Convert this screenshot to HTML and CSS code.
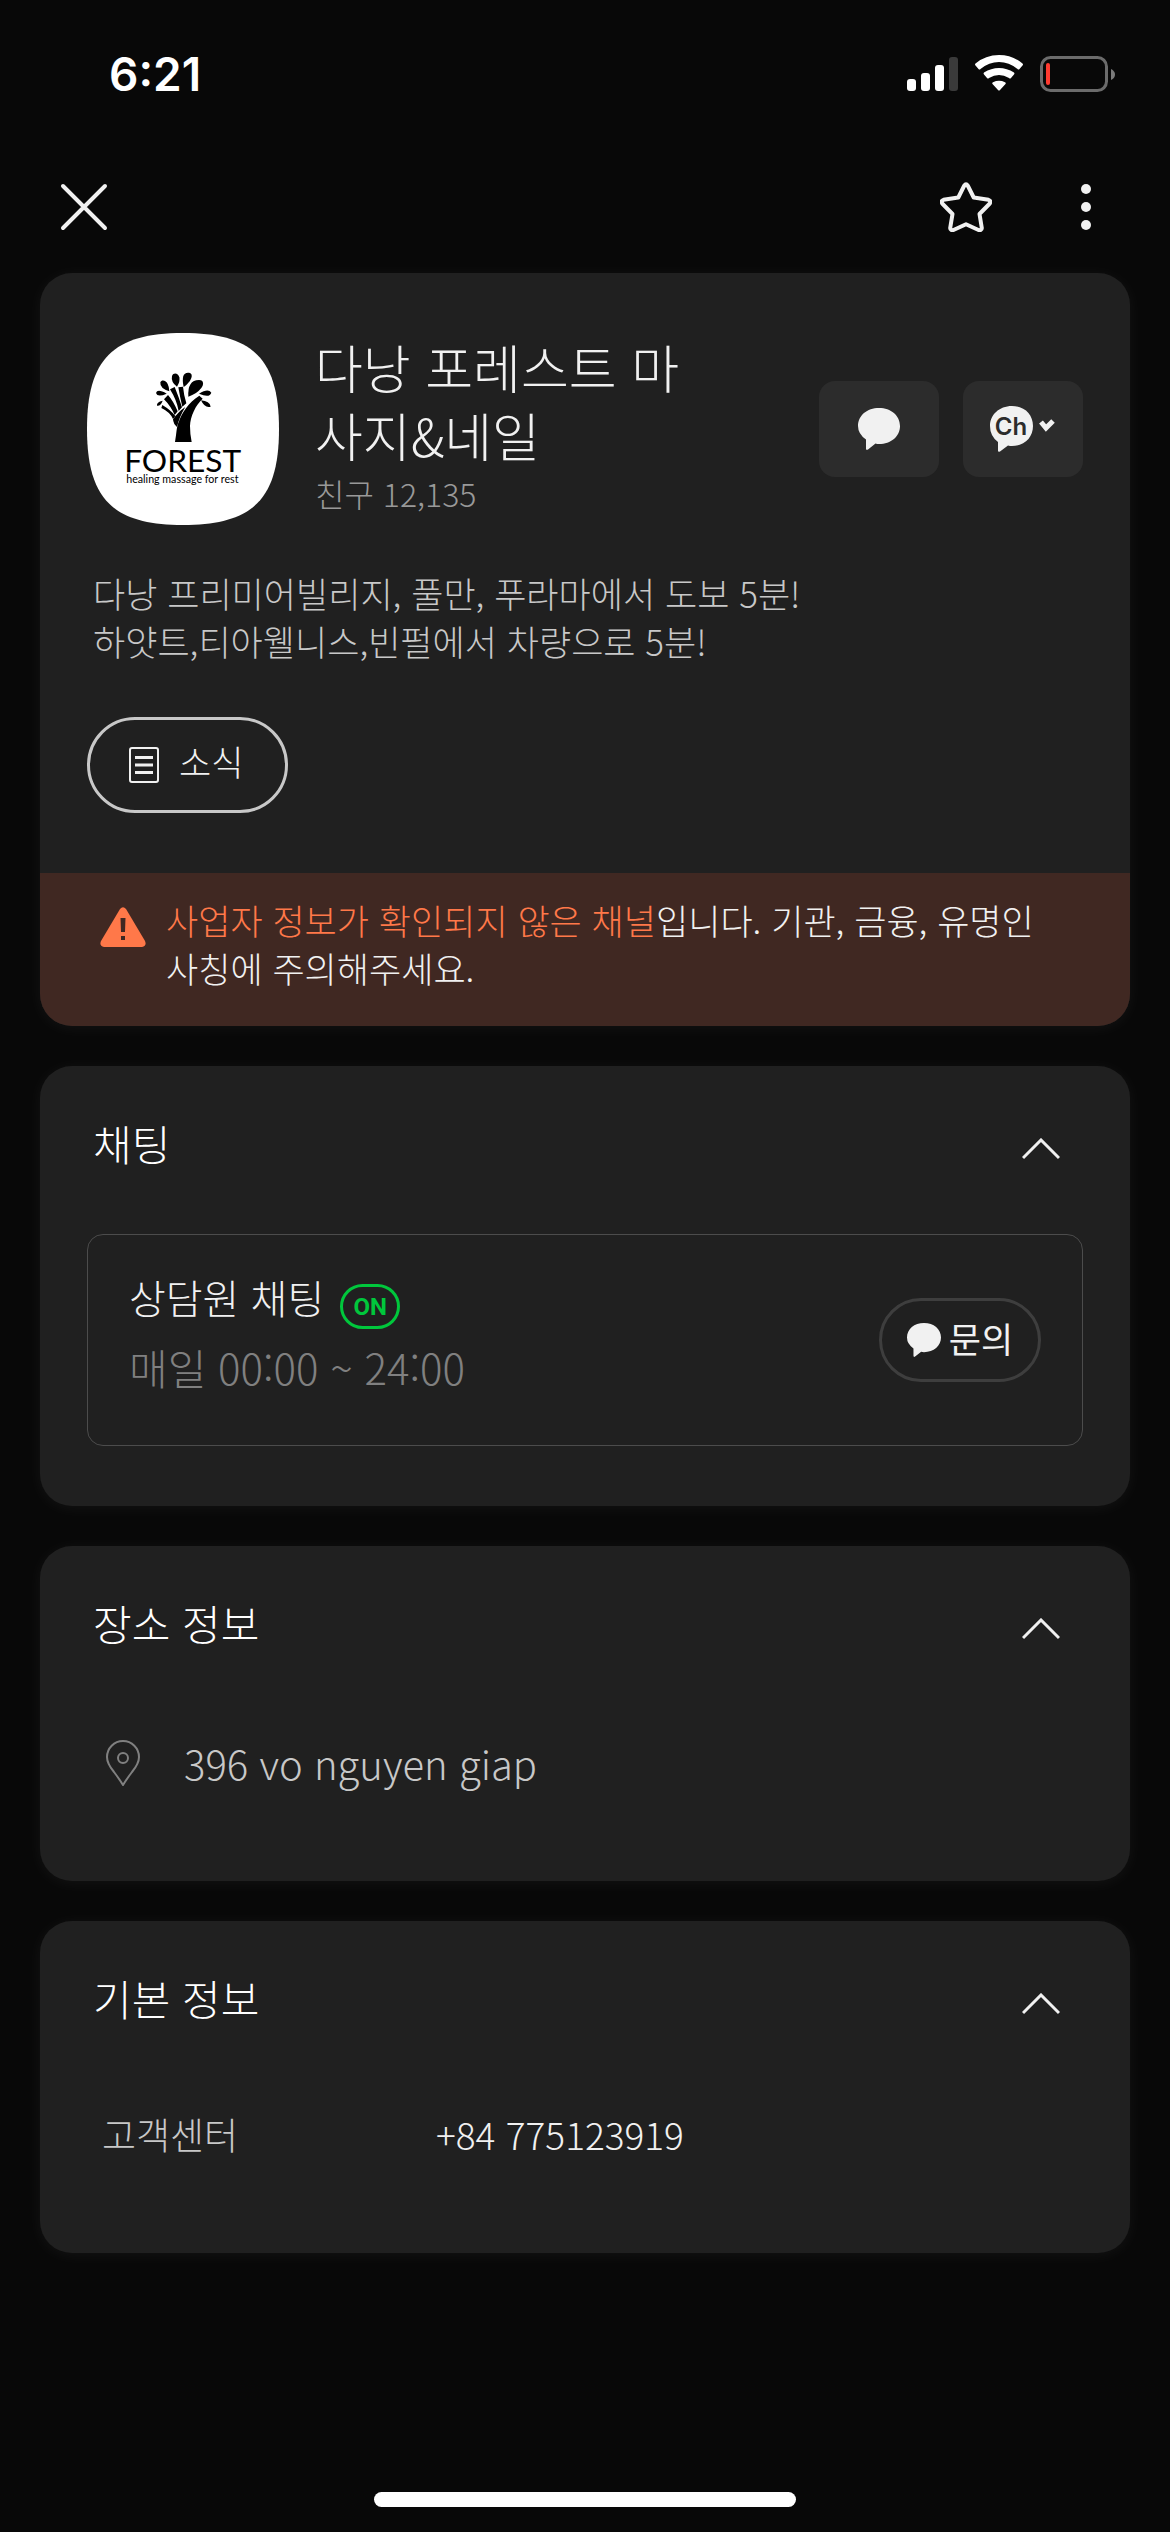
FILE: index.html
```html
<!DOCTYPE html>
<html lang="ko">
<head>
<meta charset="utf-8">
<meta name="viewport" content="width=device-width, initial-scale=1">
<title>다낭 포레스트 마사지&amp;네일</title>
<link rel="stylesheet" href="styles.css">
</head>
<body>
<div class="screen">
  <div class="status-bar">
    <time class="clock">6:21</time>
    <svg class="status-icons" viewBox="0 0 210 40" aria-hidden="true">
      <rect x="0" y="25" width="9" height="12" rx="3" fill="#fff"/>
      <rect x="14" y="19" width="9" height="18" rx="3" fill="#fff"/>
      <rect x="28" y="11" width="9" height="26" rx="3" fill="#fff"/>
      <rect x="42" y="3" width="9" height="34" rx="3" fill="#3a3a3a"/>
      <path fill="#fff" d="M68.500 11.500 Q67.500 10.500 68.500 9.500 Q78.500 1 92 1 T115.500 9.500 Q116.500 10.500 115.500 11.500 L112.500 15 Q111.500 16 110.500 15 Q102 8 92 8 T73.500 15 Q72.500 16 71.500 15Z"/>
      <path fill="#fff" d="M77 20.500 Q76 19.500 77 18.500 Q84 14 92 14 T107 18.500 Q108 19.500 107 20.500 L104 24 Q103 25 102 24 Q97 21 92 21 T82 24 Q81 25 80 24Z"/>
      <path fill="#fff" d="M85.500 30 Q84.500 29 86 28.200 Q92 25.500 98 28.200 Q99.500 29 98.500 30 L93 36 Q92 37 91 36Z"/>
      <rect x="134.500" y="3.500" width="65" height="33" rx="9" fill="none" stroke="#6b6b6b" stroke-width="3"/>
      <rect x="139" y="9" width="4" height="22" rx="2" fill="#ff3b30"/>
      <path d="M204 15 Q208 17 208 20.500 T204 26Z" fill="#7a7a7a"/>
    </svg>
  </div>

  <nav class="toolbar">
    <button class="icon-button" type="button" aria-label="닫기">
      <svg class="icon-close" viewBox="0 0 48 48"><path d="M3 3 45 45M45 3 3 45" fill="none" stroke="#f1f1f1" stroke-width="4" stroke-linecap="round"/></svg>
    </button>
    <div class="toolbar-actions">
      <button class="icon-button" type="button" aria-label="즐겨찾기">
        <svg class="icon-star" viewBox="0 0 52 50"><path d="M24.300 3.500Q26 .800 27.700 3.500L33.700 15.500 48.500 17.800Q51.500 18.800 49.800 21.500L39.500 32 41.800 46Q41.600 48.800 38.500 48L26 42.300 13.500 48Q10.400 48.800 10.200 46L12.500 32 2.200 21.500Q.500 18.800 3.500 17.800L18.300 15.500Z" fill="none" stroke="#f1f1f1" stroke-width="4" stroke-linejoin="round"/></svg>
      </button>
      <button class="icon-button" type="button" aria-label="더보기">
        <svg class="icon-more" viewBox="0 0 12 48"><g fill="#f1f1f1"><circle cx="6" cy="6" r="5"/><circle cx="6" cy="24" r="5"/><circle cx="6" cy="42" r="5"/></g></svg>
      </button>
    </div>
  </nav>

  <main class="cards">
    <section class="card">
      <div class="profile">
        <svg class="avatar" viewBox="21 39 576 576" role="img" aria-label="FOREST">
          <path fill="#fff" d="M309 39C519 39 597 117 597 327S519 615 309 615 21 537 21 327 99 39 309 39Z"/>
          <g fill="#000">
            <path d="M285 366C290 340 289 322 296 306C305 280 325 247 358 227L368 236C346 256 331 290 330 318Q330 342 335 366Z"/>
            <path d="M291 321Q280 312 279 298Q295 275 316 261Q298 290 291 321Z"/>
            <path d="M247 255Q272 270 286 288L279 297Q270 276 244 264Z"/>
            <path d="M264 225Q280 243 293 274L284 285Q272 258 252 238Z"/>
            <path d="M284 201Q296 230 306 262L296 273Q290 240 270 208Z"/>
            <path d="M309 200Q311 222 319 250L307 260Q300 232 295 202Z"/>
            <path d="M325 230Q322 180 357 180C373 180 371 195 364 204Q350 222 325 230Z"/>
            <path d="M311 201Q302 158 324 158C345 158 334 185 311 201Z"/>
            <path d="M291 200Q272 186 276 168C281 156 295 160 298 172Q301 184 291 200Z"/>
            <path d="M268 214Q239 205 241 187C246 177 259 183 263 192Q268 202 268 214Z"/>
            <path d="M260 221Q232 233 228 219Q232 205 260 221Z"/>
            <path d="M248 242Q242 259 231 257Q229 246 248 242Z"/>
            <path d="M357 221Q385 204 394 218Q389 235 357 221Z"/>
            <path d="M363 241Q389 243 392 260Q374 265 363 241Z"/>
          </g>
          <text class="logo-name" x="308" y="455">FOREST</text>
          <text class="logo-tagline" x="307" y="488">healing massage for rest</text>
        </svg>
        <div class="profile-text">
          <h1 class="name">다낭 포레스트 마사지&amp;네일</h1>
          <p class="friends">친구 12,135</p>
        </div>
        <div class="profile-actions">
          <button class="tile" type="button" aria-label="채팅">
            <svg class="icon-bubble" viewBox="0 0 42 42"><path fill="#f1f1f1" d="M21 0C33 0 42 7.500 42 18S33 36 21 36Q19 36 17.500 35.500L10 41.500Q8 42.600 8 40.500V31.500Q0 26 0 18C0 7.500 9 0 21 0Z"/></svg>
          </button>
          <button class="tile" type="button" aria-label="채널 메뉴">
            <svg class="icon-channel" viewBox="0 0 66 46"><path fill="#f1f1f1" d="M22 0C35 0 43 9 43 20S35 40 22 40Q20 40 18 39.500L10 45.500Q8 46.500 8 44.500V36Q0 30 0 20C0 9 9 0 22 0Z"/><text class="ch" x="21" y="29">Ch</text><path d="M51 16 56 22 63 15" fill="none" stroke="#f1f1f1" stroke-width="5"/></svg>
          </button>
        </div>
      </div>
      <p class="description">다낭 프리미어빌리지, 풀만, 푸라마에서 도보 5분!<br>하얏트,티아웰니스,빈펄에서 차량으로 5분!</p>
      <button class="news" type="button">
        <svg class="icon-news" viewBox="0 0 30 36"><rect x="1" y="1" width="28" height="34" rx="2" fill="none" stroke="#f1f1f1" stroke-width="2"/><path d="M6 10.500H24M6 18H24M6 25.500H24" stroke="#f1f1f1" stroke-width="3"/></svg>
        <span>소식</span>
      </button>
      <div class="notice">
        <svg class="icon-warning" viewBox="0 0 46 40"><path fill="#ff7849" d="M20 2Q23-1.500 26 2L45 34Q47 39 42 40H4Q-1 39 1 34Z"/><path fill="#402822" d="M20.500 11H25.500L25 25H21ZM21 29H25V33H21Z"/></svg>
        <p class="notice-text"><strong class="alert">사업자 정보가 확인되지 않은 채널</strong>입니다. 기관, 금융, 유명인<br>사칭에 주의해주세요.</p>
      </div>
    </section>

    <section class="card">
      <header class="card-header">
        <h2 class="card-title">채팅</h2>
        <button class="icon-button toggle" type="button" aria-label="채팅 접기">
          <svg class="icon-chevron" viewBox="0 0 38 22"><path d="M1 20 19 2 37 20" fill="none" stroke="#f1f1f1" stroke-width="3"/></svg>
        </button>
      </header>
      <div class="chat-box">
        <div class="chat-info">
          <div class="chat-name"><span>상담원 채팅</span><span class="badge">ON</span></div>
          <p class="chat-hours">매일 00:00 ~ 24:00</p>
        </div>
        <button class="ask" type="button">
          <svg class="icon-bubble-small" viewBox="0 0 42 42"><path fill="#f1f1f1" d="M21 0C33 0 42 7.500 42 18S33 36 21 36Q19 36 17.500 35.500L10 41.500Q8 42.600 8 40.500V31.500Q0 26 0 18C0 7.500 9 0 21 0Z"/></svg>
          <span>문의</span>
        </button>
      </div>
    </section>

    <section class="card">
      <header class="card-header">
        <h2 class="card-title">장소 정보</h2>
        <button class="icon-button toggle" type="button" aria-label="장소 정보 접기">
          <svg class="icon-chevron" viewBox="0 0 38 22"><path d="M1 20 19 2 37 20" fill="none" stroke="#f1f1f1" stroke-width="3"/></svg>
        </button>
      </header>
      <address class="place">
        <svg class="icon-pin" viewBox="0 0 34 46"><g fill="none" stroke="#808080" stroke-width="2"><path d="M17 45Q14 40 8 32C3 26 1 22 1 17A16 16 0 0 1 33 17C33 22 31 26 26 32Q20 40 17 45Z"/><circle cx="17" cy="18" r="5"/></g></svg>
        <span>396 vo nguyen giap</span>
      </address>
    </section>

    <section class="card">
      <header class="card-header">
        <h2 class="card-title">기본 정보</h2>
        <button class="icon-button toggle" type="button" aria-label="기본 정보 접기">
          <svg class="icon-chevron" viewBox="0 0 38 22"><path d="M1 20 19 2 37 20" fill="none" stroke="#f1f1f1" stroke-width="3"/></svg>
        </button>
      </header>
      <dl class="details">
        <dt>고객센터</dt>
        <dd><a href="tel:+84775123919">+84 775123919</a></dd>
      </dl>
    </section>
  </main>

  <div class="home-indicator"></div>
</div>
</body>
</html>
```
FILE: styles.css
```css
* {
  box-sizing: border-box;
}

body {
  margin: 0;
  background: #080808;
  color: #f1f1f1;
  font-family: "Noto Sans CJK KR", sans-serif;
  font-weight: 300;
}

h1, h2, p, dl, dd {
  margin: 0;
  font-weight: 300;
}

button {
  padding: 0;
  border: 0;
  background: none;
  color: inherit;
  font: inherit;
  cursor: pointer;
}

svg {
  display: block;
  flex: none;
}

.screen {
  display: flex;
  flex-direction: column;
  min-height: 100vh;
}

.status-bar {
  display: flex;
  align-items: center;
  justify-content: space-between;
  height: 148px;
  padding: 0 53px 0 109px;
}

.clock {
  color: #fff;
  font-family: Inter, sans-serif;
  font-size: 46px;
  font-weight: 600;
}

.status-icons {
  width: 210px;
  height: 40px;
}

.toolbar {
  display: flex;
  align-items: center;
  justify-content: space-between;
  height: 118px;
  padding: 0 78px 0 60px;
}

.toolbar-actions {
  display: flex;
  align-items: center;
  gap: 88px;
}

.icon-close {
  width: 48px;
  height: 48px;
}

.icon-star {
  width: 52px;
  height: 50px;
}

.icon-more {
  width: 12px;
  height: 48px;
}

.cards {
  display: flex;
  flex-direction: column;
  gap: 40px;
  padding: 7px 40px 0;
}

.card {
  overflow: hidden;
  border-radius: 32px;
  background: #202020;
  box-shadow: 0 2px 16px rgba(255, 255, 255, 0.05);
}

/* Profile */

.profile {
  display: flex;
  align-items: center;
  padding: 60px 47px 0;
}

.avatar {
  width: 192px;
  height: 192px;
}

.logo-name {
  font: 400 95px Lato, sans-serif;
  text-anchor: middle;
}

.logo-tagline {
  font: 400 32px Lato, sans-serif;
  text-anchor: middle;
}

.profile-text {
  flex: 1;
  align-self: flex-start;
  margin: 0 108px 0 36px;
}

.name {
  font-size: 52px;
  line-height: 68px;
  word-break: break-all;
}

.friends {
  color: #999;
  font-size: 32px;
  line-height: 48px;
}

.profile-actions {
  display: flex;
  gap: 24px;
}

.tile {
  display: grid;
  place-items: center;
  width: 120px;
  height: 96px;
  border-radius: 16px;
  background: #2c2c2c;
}

.icon-bubble {
  width: 42px;
  height: 42px;
}

.icon-channel {
  width: 66px;
  height: 46px;
}

.ch {
  fill: #2c2c2c;
  font: 600 24px Inter, sans-serif;
  text-anchor: middle;
}

.description {
  margin-top: 44px;
  padding: 0 53px;
  color: #c8c8c8;
  font-size: 35px;
  line-height: 48px;
}

.news {
  display: flex;
  align-items: center;
  gap: 20px;
  height: 96px;
  margin: 52px 47px 60px;
  padding: 0 42px 0 39px;
  border: 3px solid #c8c8c8;
  border-radius: 48px;
  font-size: 35px;
  line-height: 48px;
}

.news span {
  padding-bottom: 8px;
}

.icon-news {
  width: 30px;
  height: 36px;
}

.notice {
  display: flex;
  align-items: flex-start;
  gap: 20px;
  padding: 23px 60px 34px;
  background: #402822;
}

.icon-warning {
  width: 46px;
  height: 40px;
  margin-top: 11px;
}

.notice-text {
  font-size: 35px;
  line-height: 48px;
}

.alert {
  color: #ff7849;
  font-weight: 300;
}

/* Collapsible cards */

.card-header {
  display: flex;
  align-items: center;
  justify-content: space-between;
  height: 66px;
  margin-top: 44px;
  padding: 0 70px 0 53px;
}

.card-title {
  color: #fff;
  font-size: 42px;
  line-height: 60px;
}

.toggle {
  margin-top: 12px;
}

.icon-chevron {
  width: 38px;
  height: 22px;
}

.chat-box {
  display: flex;
  align-items: center;
  justify-content: space-between;
  margin: 58px 47px 60px;
  padding: 30px 41px;
  border: 1px solid #4c4c4c;
  border-radius: 16px;
}

.chat-info {
  display: grid;
  gap: 8px;
  padding-bottom: 18px;
}

.chat-name {
  display: flex;
  align-items: flex-end;
  gap: 16px;
  font-size: 40px;
  line-height: 64px;
}

.badge {
  display: grid;
  place-items: center;
  width: 60px;
  height: 45px;
  border: 3px solid #00c73c;
  border-radius: 24px;
  color: #00c73c;
  font: 700 24px Roboto, sans-serif;
}

.chat-hours {
  color: #808080;
  font-size: 42px;
  line-height: 60px;
}

.ask {
  display: flex;
  align-items: center;
  justify-content: center;
  gap: 8px;
  width: 162px;
  height: 84px;
  border: 3px solid #3e3e3e;
  border-radius: 42px;
  font-size: 35px;
  font-weight: 400;
  line-height: 48px;
}

.ask span {
  padding-bottom: 4px;
}

.icon-bubble-small {
  width: 34px;
  height: 34px;
}

.place {
  display: flex;
  align-items: center;
  gap: 44px;
  margin: 77px 66px 88px;
  color: #c8c8c8;
  font-size: 40px;
  font-style: normal;
  line-height: 60px;
}

.icon-pin {
  width: 34px;
  height: 46px;
}

.details {
  display: grid;
  grid-template-columns: 334px 1fr;
  margin: 73px 62px 89px;
  font-size: 37px;
  line-height: 60px;
}

.details dt {
  color: #c8c8c8;
}

.details a {
  color: #f1f1f1;
  text-decoration: none;
}

.home-indicator {
  width: 36%;
  height: 15px;
  margin: auto auto 25px;
  border-radius: 8px;
  background: #fff;
}
```
